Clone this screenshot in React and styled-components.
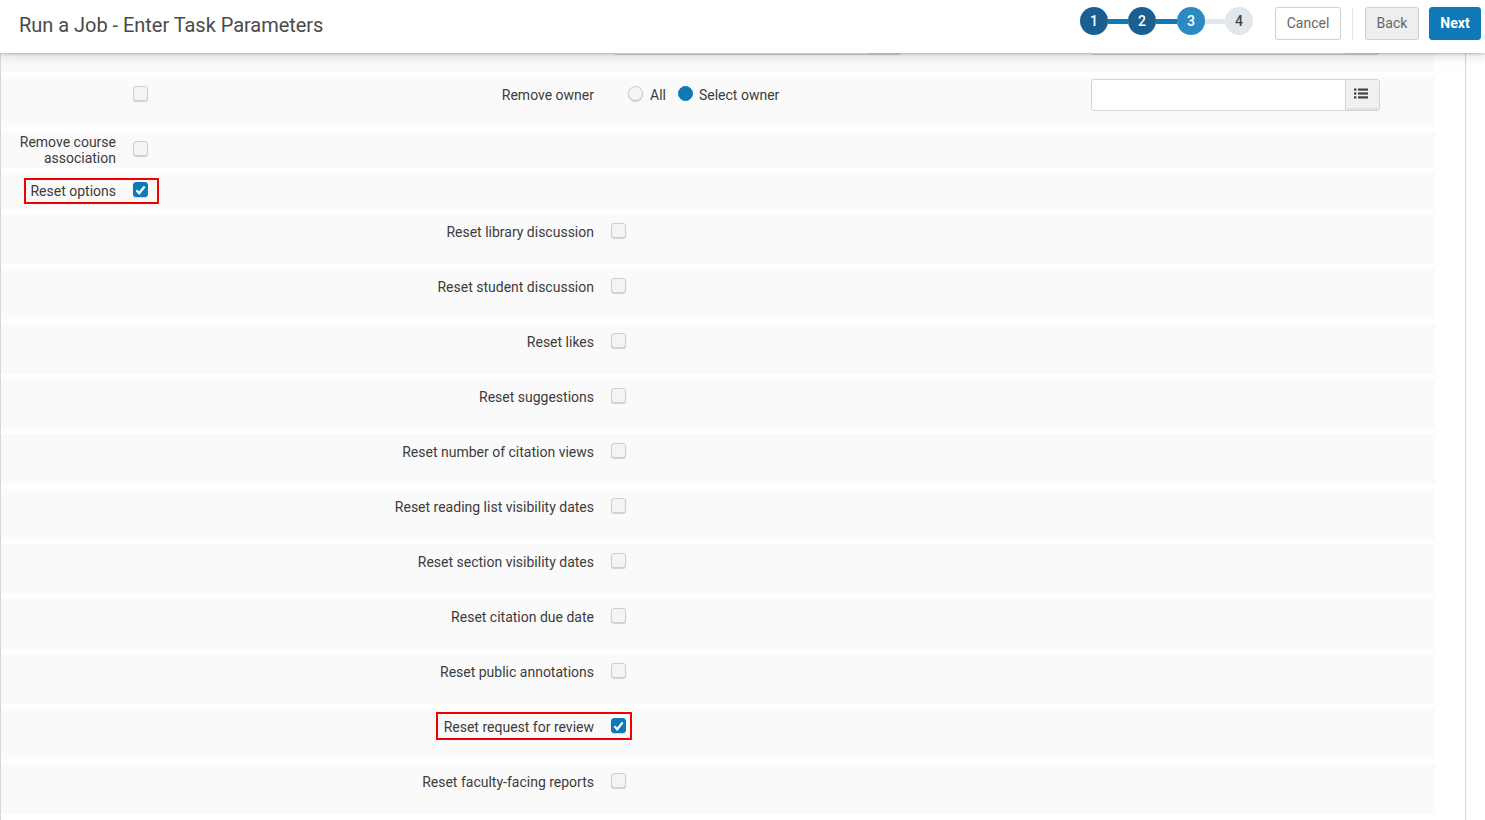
import React from "react";
import styled, { createGlobalStyle } from "styled-components";

const Global = createGlobalStyle`
  html, body { margin: 0; padding: 0; height: 100%; overflow: hidden; background: #fff; }
  body { font-family: Roboto, "Liberation Sans", sans-serif; font-size: 14px; color: #333; }
  * { box-sizing: border-box; }
`;

const Page = styled.div`
  width: 1485px;
  height: 820px;
  overflow: hidden;
  position: relative;
`;

const Header = styled.header`
  position: relative;
  z-index: 2;
  height: 53px;
  background: #fff;
  box-shadow: 0 1px 3px rgba(0, 0, 0, 0.22), 0 3px 12px rgba(0, 0, 0, 0.12);
  display: flex;
  align-items: flex-start;
  padding: 7px 4px 0 19px;
`;

const Title = styled.h1`
  margin: 5px 0 0;
  flex: 1;
  font-size: 20px;
  line-height: 27px;
  font-weight: 400;
  letter-spacing: -0.03px;
  color: #4a4a4a;
`;

const Steps = styled.div`
  display: flex;
  align-items: center;
  margin: 0 22px 0 0;
`;

const Step = styled.div`
  width: 28px;
  height: 28px;
  border-radius: 50%;
  display: flex;
  align-items: center;
  justify-content: center;
  font-size: 14px;
  font-weight: 500;
  color: ${(p) => (p.$state === "todo" ? "#444" : "#fff")};
  background: ${(p) =>
    p.$state === "done" ? "#1a5f8f" : p.$state === "active" ? "#2b8ac2" : "#e2e7eb"};
`;

const Connector = styled.div`
  width: ${(p) => p.$w}px;
  height: 5px;
  background: ${(p) => (p.$on ? "#0f7ab8" : "#e2e7eb")};
`;

const Button = styled.button`
  height: 33px;
  padding: 0 0 2px;
  width: ${(p) => p.$w}px;
  border-radius: 3px;
  font-family: inherit;
  font-size: 14px;
  font-weight: ${(p) => (p.$primary ? 700 : 400)};
  color: ${(p) => (p.$primary ? "#fff" : "#666")};
  background: ${(p) => (p.$primary ? "#0f79b8" : p.$muted ? "#eeeeee" : "#fff")};
  border: 1px solid ${(p) => (p.$primary ? "#0f79b8" : "#d0d0d0")};
`;

const Divider = styled.div`
  width: 1px;
  height: 33px;
  background: #e8e8e8;
  margin: 0 12px 0 11px;
`;

const Gap = styled.div`
  width: 10px;
`;

const Body = styled.main`
  height: 767px;
  border-left: 1px solid #d6d6d6;
  border-right: 1px solid #d6d6d6;
  width: 1466px;
  overflow: hidden;
  display: flex;
  flex-direction: column;
  gap: 5px;
`;

const Row = styled.div`
  flex: none;
  width: 1434px;
  height: ${(p) => p.$h}px;
  background: #fafafa;
  display: flex;
  align-items: flex-start;
  position: relative;
`;

const Field = styled.div`
  display: flex;
  align-items: flex-start;
  position: relative;
`;

const Label = styled.label`
  width: ${(p) => p.$w}px;
  text-align: right;
  line-height: 16px;
  color: #3c3c3c;
  margin-right: ${(p) => p.$mr ?? 17}px;
  padding-top: ${(p) => p.$pad ?? 10}px;
`;

const Box = styled.span`
  display: flex;
  align-items: center;
  justify-content: center;
  width: 15px;
  height: 15px;
  border-radius: 3px;
  margin-top: 9px;
  background: ${(p) => (p.$on ? "#0f79b8" : "#f4f4f4")};
  border: 1px solid ${(p) => (p.$on ? "#0f79b8" : "#cfcfcf")};
  box-shadow: 0 1px 1px rgba(0, 0, 0, 0.16);
`;

const Highlight = styled.div`
  position: absolute;
  left: ${(p) => p.$l}px;
  top: ${(p) => p.$t}px;
  width: ${(p) => p.$w}px;
  height: ${(p) => p.$h}px;
  border: 2px solid #f00000;
  pointer-events: none;
`;

const RadioGroup = styled.div`
  display: flex;
  align-items: flex-start;
  padding-top: 9px;
`;

const Radio = styled.span`
  width: 15px;
  height: 15px;
  border-radius: 50%;
  margin-right: ${(p) => p.$mr}px;
  background: ${(p) => (p.$on ? "#0f79b8" : "#f6f6f6")};
  border: 1px solid ${(p) => (p.$on ? "#0f79b8" : "#c8c8c8")};
  box-shadow: ${(p) => (p.$on ? "none" : "0 1px 1px rgba(0,0,0,.16)")};
`;

const RadioText = styled.span`
  line-height: 16px;
  margin-right: ${(p) => p.$mr || 0}px;
  padding-top: 1px;
  color: #3c3c3c;
`;

const Picker = styled.div`
  display: flex;
  position: absolute;
  left: ${(p) => p.$l}px;
  top: ${(p) => p.$t}px;
  width: 289px;
  height: 32px;
  background: #fff;
  border: 1px solid #d4d4d4;
  border-radius: 3px;
`;

const PickerField = styled.div`
  flex: 1;
`;

const PickerButton = styled.div`
  width: 34px;
  background: #f0f0f0;
  border-left: 1px solid #d4d4d4;
  display: flex;
  align-items: center;
  justify-content: center;
  border-bottom: 2px solid #e2e2e2;
  color: #444;
  padding: 0 3px 2px 0;
`;

const Check = () => (
  <svg width="11" height="10" viewBox="0 0 11 10" fill="none">
    <path d="M1.4 5.2 4.2 8.2 9.6 1.5" stroke="#fff" strokeWidth="2.2" />
  </svg>
);

const ListIcon = () => (
  <svg width="14" height="11" viewBox="0 0 14 11" fill="#444">
    <rect x="0" y="0.5" width="2.4" height="2.2" />
    <rect x="0" y="4.4" width="2.4" height="2.2" />
    <rect x="0" y="8.3" width="2.4" height="2.2" />
    <rect x="4" y="0.5" width="10" height="2.2" />
    <rect x="4" y="4.4" width="10" height="2.2" />
    <rect x="4" y="8.3" width="10" height="2.2" />
  </svg>
);

const resetRows = [
  ["Reset library discussion"],
  ["Reset student discussion"],
  ["Reset likes"],
  ["Reset suggestions"],
  ["Reset number of citation views"],
  ["Reset reading list visibility dates"],
  ["Reset section visibility dates"],
  ["Reset citation due date"],
  ["Reset public annotations"],
  ["Reset request for review", true],
  ["Reset faculty-facing reports"],
];

export default function App() {
  return (
    <Page>
      <Global />
      <Header>
        <Title>Run a Job - Enter Task Parameters</Title>
        <Steps>
          <Step $state="done">1</Step>
          <Connector $w={20} $on />
          <Step $state="done">2</Step>
          <Connector $w={21} $on />
          <Step $state="active">3</Step>
          <Connector $w={20} />
          <Step $state="todo">4</Step>
        </Steps>
        <Button $w={66}>Cancel</Button>
        <Divider />
        <Button $w={54} $muted>Back</Button>
        <Gap />
        <Button $w={52} $primary>Next</Button>
      </Header>
      <Body>
        <Row $h={19}>
          <Picker $l={612} $t={-30}>
            <PickerField />
            <PickerButton />
          </Picker>
          <Picker $l={1090} $t={-30}>
            <PickerField />
            <PickerButton />
          </Picker>
        </Row>
        <Row $h={50}>
          <Field>
            <Label $w={115} />
            <Box />
          </Field>
          <Label $w={446} $mr={34}>Remove owner</Label>
          <RadioGroup>
            <Radio $mr={7} />
            <RadioText $mr={12}>All</RadioText>
            <Radio $mr={6} $on />
            <RadioText>Select owner</RadioText>
          </RadioGroup>
          <Picker $l={1090} $t={2}>
            <PickerField />
            <PickerButton><ListIcon /></PickerButton>
          </Picker>
        </Row>
        <Row $h={36}>
          <Field>
            <Label $w={115} $pad={2}>Remove course association</Label>
            <Box />
          </Field>
        </Row>
        <Row $h={36}>
          <Field>
            <Label $w={115}>Reset options</Label>
            <Box $on><Check /></Box>
            <Highlight $l={23} $t={5} $w={135} $h={26} />
          </Field>
        </Row>
        {resetRows.map(([text, on]) => (
          <Row $h={50} key={text}>
            <Field>
              <Label $w={593}>{text}</Label>
              <Box $on={on}>{on && <Check />}</Box>
              {on && <Highlight $l={435} $t={3} $w={196} $h={28} />}
            </Field>
          </Row>
        ))}
      </Body>
    </Page>
  );
}
